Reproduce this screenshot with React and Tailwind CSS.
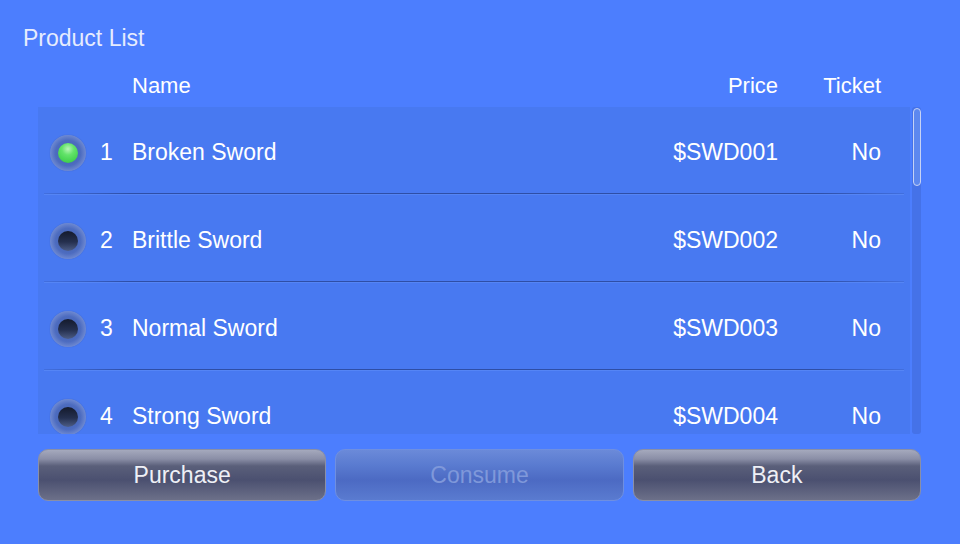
import React from "react";

const rows = [
  { n: 1, name: "Broken Sword", price: "$SWD001", ticket: "No", sel: true },
  { n: 2, name: "Brittle Sword", price: "$SWD002", ticket: "No" },
  { n: 3, name: "Normal Sword", price: "$SWD003", ticket: "No" },
  { n: 4, name: "Strong Sword", price: "$SWD004", ticket: "No" },
];

function Radio({ sel }) {
  return (
    <div className="w-[36px] h-[36px] rounded-full flex items-center justify-center bg-[radial-gradient(circle_at_50%_50%,#3f5fae_0%,#4d6cc0_50%,#8199da_82%,#5c7acb_100%)] shadow-[0_0_1px_#3b5bb0]">
      {sel ? (
        <div className="w-[20px] h-[20px] rounded-full bg-[radial-gradient(circle_at_50%_30%,#b9f5b8_0%,#63e36a_35%,#2fc63d_100%)]" />
      ) : (
        <div className="w-[20px] h-[20px] rounded-full bg-[linear-gradient(to_bottom,#141a2c_0%,#25304f_55%,#4d5d86_100%)]" />
      )}
    </div>
  );
}

function Btn({ label, disabled }) {
  return (
    <div
      className={
        "relative flex-1 h-[52px] rounded-[10px] flex items-center justify-center overflow-hidden " +
        (disabled
          ? "bg-[linear-gradient(to_bottom,#6b8ad9_0%,#5a7bd0_30%,#4c6ac3_60%,#5a7bd0_100%)] border border-[#6f8fe0]"
          : "bg-[linear-gradient(to_bottom,#a5a9bd_0%,#8a8ea6_18%,#5a5f7a_32%,#4b5070_60%,#6c7089_100%)] border border-[#8a8fa6]")
      }
    >
      <span
        className={
          "text-[23px] leading-none " + (disabled ? "text-[#7f98da]" : "text-[#eef0f6]")
        }
      >
        {label}
      </span>
    </div>
  );
}

export default function App() {
  return (
    <div
      className="w-[960px] h-[544px] bg-[#4c7efe] flex flex-col overflow-hidden"
      style={{ fontFamily: '"Liberation Sans", Arial, sans-serif' }}
    >
      <div className="pt-[26px] pl-[23px] h-[50px] text-[23px] leading-[24px] text-[#e6ecfd]">
        Product List
      </div>
      <div className="mt-[23px] h-[24px] flex items-center text-[22px] text-white pl-[132px] pr-[79px]">
        <span className="flex-1">Name</span>
        <span className="w-[100px] text-right">Price</span>
        <span className="w-[103px] text-right">Ticket</span>
      </div>
      <div className="mt-[10px] mx-[38px] mr-[39px] h-[327px] flex">
        <div className="flex-1 bg-[#4879f1] flex flex-col overflow-hidden">
          {rows.map((r) => (
            <div key={r.n} className="shrink-0 h-[88px] flex flex-col">
              <div className="flex-1 flex items-center pt-[5px] pl-[12px] pr-[29px] text-[23px] text-white">
                <Radio sel={r.sel} />
                <span className="w-[46px] pl-[14px]">{r.n}</span>
                <span className="flex-1">{r.name}</span>
                <span className="w-[120px] text-right">{r.price}</span>
                <span className="w-[103px] text-right">{r.ticket}</span>
              </div>
              <div className="h-[1px] mx-[6px] bg-[linear-gradient(to_right,rgba(40,70,150,0.2),#2e4ea6_10%,#2e4ea6_90%,rgba(40,70,150,0.2))]" />
              <div className="h-[1px] mx-[6px] bg-[#5585f5]" />
            </div>
          ))}
        </div>
        <div className="w-[9px] ml-[2px] relative bg-[#4572e8] rounded-[3px]">
          <div className="absolute top-[1px] left-[1px] right-0 h-[78px] rounded-[4px] border border-[#c6d2f5] bg-[#5d88ef]" />
        </div>
      </div>
      <div className="mt-[15px] mx-[38px] mr-[39px] flex gap-[9px]">
        <Btn label="Purchase" />
        <Btn label="Consume" disabled />
        <Btn label="Back" />
      </div>
    </div>
  );
}
